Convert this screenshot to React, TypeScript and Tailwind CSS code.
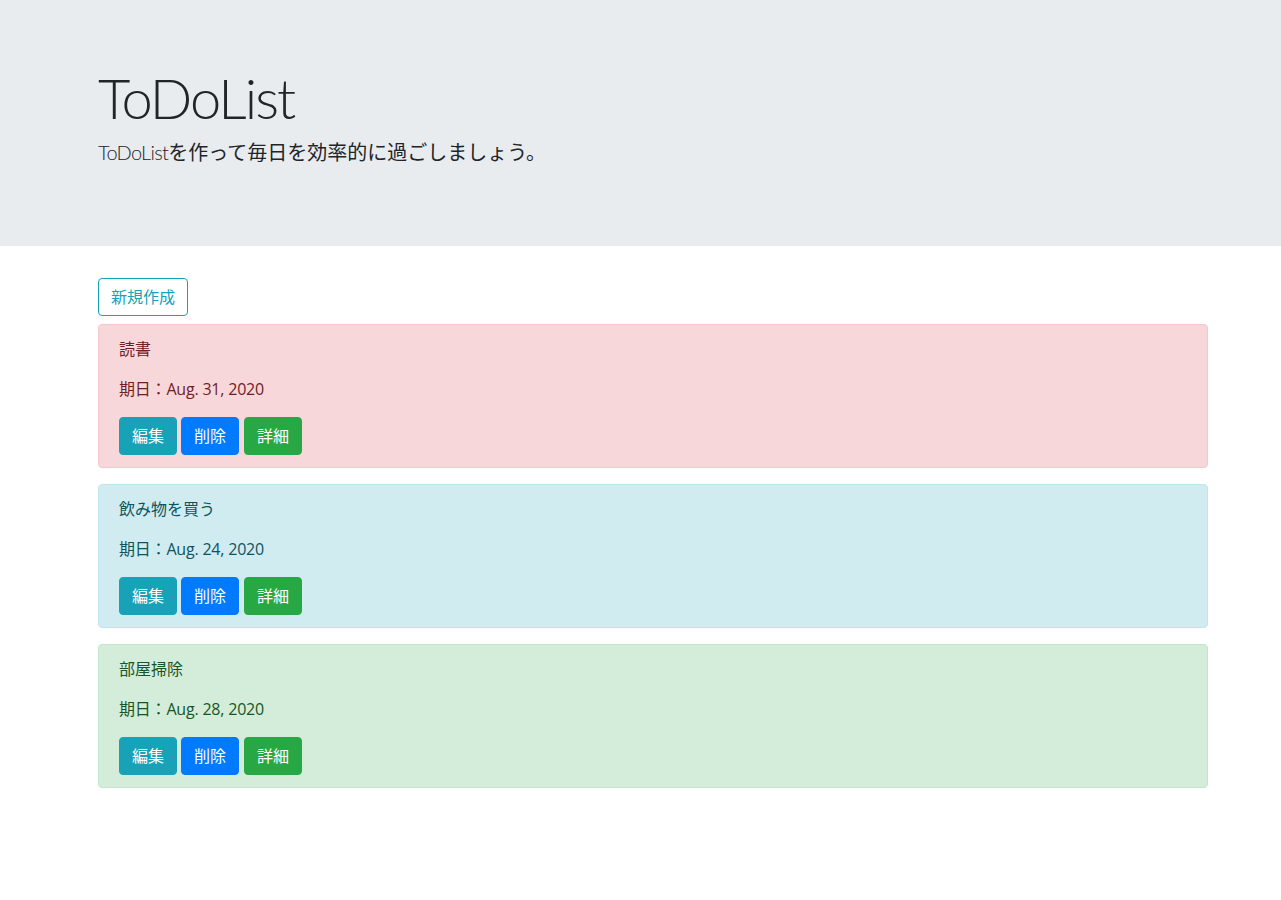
import React from 'react';

interface Todo {
  title: string;
  deadline: string;
  tone: 'danger' | 'info' | 'success';
}

const todos: Todo[] = [
  { title: '読書', deadline: 'Aug. 31, 2020', tone: 'danger' },
  { title: '飲み物を買う', deadline: 'Aug. 24, 2020', tone: 'info' },
  { title: '部屋掃除', deadline: 'Aug. 28, 2020', tone: 'success' },
];

const toneClass = {
  danger: 'bg-[#f8d7da] border-[#f5c6cb] text-[#721c24]',
  info: 'bg-[#d1ecf1] border-[#bee5eb] text-[#0c5460]',
  success: 'bg-[#d4edda] border-[#c3e6cb] text-[#155724]',
};

const font = "font-['Open_Sans','Noto_Sans_CJK_JP',sans-serif]";
const lightFont = "font-['Lato','Noto_Sans_CJK_JP',sans-serif]";

export default function App() {
  return (
    <div className={`min-h-screen bg-white text-[#212529] text-base leading-6 ${font}`}>
      {/* ヘッダー */}
      <div className="bg-[#e9ecef] h-[246px] mb-8 pt-[64px] pl-[98px]">
        <h1 className={`text-[56px] leading-[67px] font-light tracking-[-2px] mb-2 ${lightFont}`}>ToDoList</h1>
        <p className="text-[20px] leading-[30px] -mt-[2px]">
          <span className={`font-light tracking-[-0.7px] ${lightFont}`}>ToDoList</span>を作って毎日を効率的に過ごしましょう。
        </p>
      </div>

      <div className="pl-[98px] w-[1208px]">
        <button className="h-[38px] px-3 border border-[#17a2b8] text-[#17a2b8] rounded mb-2 bg-white">
          新規作成
        </button>

        {todos.map((t, i) => (
          <div key={i} className={`border rounded px-5 pt-3 pb-3 mb-4 ${toneClass[t.tone]}`}>
            <p className="mb-4">{t.title}</p>
            <p className="mb-4 tracking-[-0.2px]">期日：{t.deadline}</p>
            <div className="flex">
              <button className="h-[38px] px-3 border border-[#17a2b8] rounded bg-[#17a2b8] text-white">編集</button>
              <button className="h-[38px] px-3 ml-1 border border-[#007bff] rounded bg-[#007bff] text-white">削除</button>
              <button className="h-[38px] px-3 ml-[5px] border border-[#28a745] rounded bg-[#28a745] text-white">詳細</button>
            </div>
          </div>
        ))}
      </div>
    </div>
  );
}
